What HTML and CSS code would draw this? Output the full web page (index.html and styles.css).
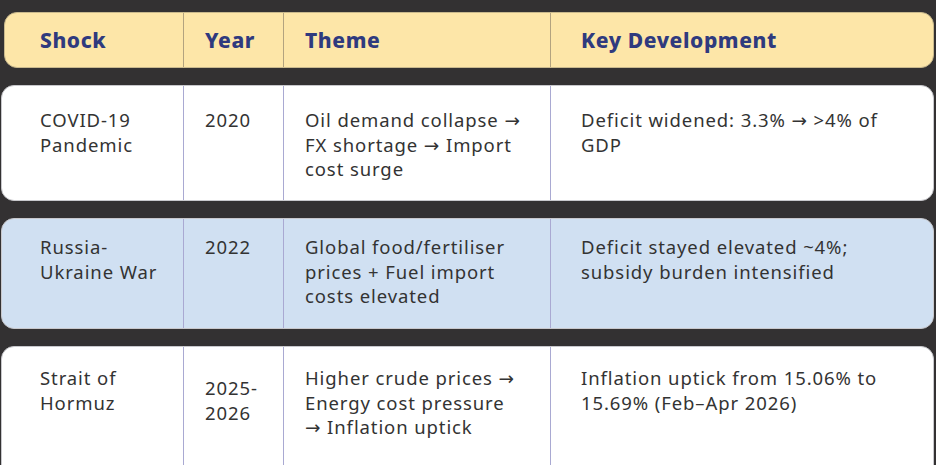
FILE: index.html
```html
<!DOCTYPE html>
<html lang="en">
<head>
<meta charset="utf-8">
<link rel="stylesheet" href="styles.css">
</head>
<body>
<div class="table">
  <div class="row head">
    <div class="cell c1">Shock</div>
    <div class="cell c2">Year</div>
    <div class="cell c3">Theme</div>
    <div class="cell c4">Key Development</div>
  </div>
  <div class="row body r1">
    <div class="cell c1">COVID-19<br>Pandemic</div>
    <div class="cell c2">2020</div>
    <div class="cell c3">Oil demand collapse →<br>FX shortage → Import<br>cost surge</div>
    <div class="cell c4">Deficit widened: 3.3% → &gt;4% of<br>GDP</div>
  </div>
  <div class="row body r2 blue">
    <div class="cell c1">Russia-<br>Ukraine War</div>
    <div class="cell c2">2022</div>
    <div class="cell c3">Global food/fertiliser<br>prices + Fuel import<br>costs elevated</div>
    <div class="cell c4">Deficit stayed elevated ~4%;<br>subsidy burden intensified</div>
  </div>
  <div class="row body r3">
    <div class="cell c1">Strait of<br>Hormuz</div>
    <div class="cell c2 shift">2025-<br>2026</div>
    <div class="cell c3">Higher crude prices →<br>Energy cost pressure<br>→ Inflation uptick</div>
    <div class="cell c4">Inflation uptick from 15.06% to<br>15.69% (Feb–Apr 2026)</div>
  </div>
</div>
</body>
</html>
```
FILE: styles.css
```css
html, body {
  margin: 0;
  padding: 0;
  background: #333132;
  height: 100%;
  overflow: hidden;
}
body {
  font-family: "Noto Sans", "DejaVu Sans", sans-serif;
  color: #333333;
}
.table {
  display: flex;
  flex-direction: column;
  gap: 17px;
  padding: 12px 2px 0 1px;
}
.row {
  display: grid;
  grid-template-columns: 181px 100px 267px 1fr;
  border-radius: 13px;
  overflow: hidden;
}
.head {
  background: #fde6a8;
  height: 56px;
  margin-left: 3px;
  grid-template-columns: 178px 100px 267px 1fr;
  border: 1px solid #c9b98d;
  box-sizing: border-box;
}
.head .cell {
  font-weight: 800;
  font-size: 21px;
  letter-spacing: 0.6px;
  color: #2f3a7e;
  display: flex;
  align-items: center;
  border-left: 1px solid #b3a37f;
}
.head .cell.c1 { border-left: none; padding-left: 35px; }
.body {
  background: #ffffff;
  border: 1px solid #c8c8cc;
  box-sizing: border-box;
}
.body.blue { background: #d0e0f2; }
.body .cell {
  font-size: 18.5px;
  letter-spacing: 0.9px;
  line-height: 24.5px;
  border-left: 1px solid #a9a9d2;
}
.body .cell.c1 { border-left: none; }
.cell.c1 { padding-left: 38px; }
.cell.c2 { padding-left: 21px; }
.cell.c3 { padding-left: 21px; }
.cell.c4 { padding-left: 30px; }
.r1 { height: 116px; }
.r1 .cell { padding-top: 22px; }
.r2 { height: 111px; }
.r2 .cell { padding-top: 16px; }
.r3 { height: 140px; }
.r3 .cell { padding-top: 19px; }
.r3 .cell.shift { padding-top: 29px; }
```
